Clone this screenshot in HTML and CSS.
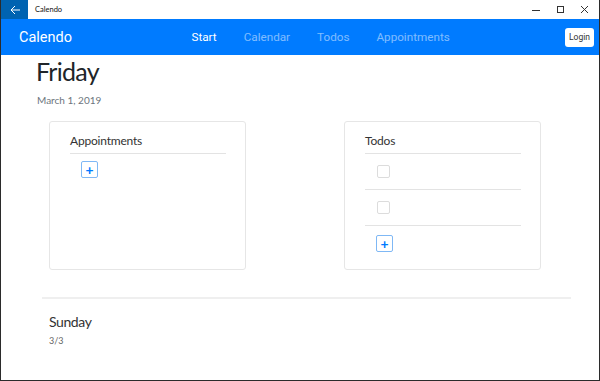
FILE: index.html
```html
<!DOCTYPE html>
<html lang="en">
<head>
    <meta charset="UTF-8">
    <meta name="viewport" content="width=device-width, initial-scale=1.0">
    <title>Calendo</title>
    <link rel="stylesheet" href="styles.css">
</head>
<body>
    <div class="window">
        <div class="titlebar">
            <div class="back">
                <svg width="10" height="10" viewBox="0 0 10 10">
                    <path d="M1 5h9M5 1L1 5l4 4" fill="none" stroke="#fff" stroke-width="1"/>
                </svg>
            </div>
            <span class="title">Calendo</span>
            <div class="controls">
                <svg width="10" height="10" viewBox="0 0 10 10">
                    <path d="M0 5.5h8" stroke="#333" stroke-width="1"/>
                </svg>
                <svg width="10" height="10" viewBox="0 0 10 10">
                    <rect x="1.5" y="1.5" width="6" height="6" fill="none" stroke="#333" stroke-width="1"/>
                </svg>
                <svg width="10" height="10" viewBox="0 0 10 10">
                    <path d="M1 1l7 7M8 1L1 8" stroke="#333" stroke-width="1"/>
                </svg>
            </div>
        </div>

        <nav class="navbar">
            <span class="brand">Calendo</span>
            <ul class="nav">
                <li class="active">Start</li>
                <li>Calendar</li>
                <li>Todos</li>
                <li>Appointments</li>
            </ul>
            <button class="login">Login</button>
        </nav>

        <main class="content">
            <section class="today">
                <h1>Friday</h1>
                <p class="date">March 1, 2019</p>
                <div class="cards">
                    <div class="card">
                        <div class="card-header">Appointments</div>
                        <button class="add-btn">+</button>
                    </div>
                    <div class="card">
                        <div class="card-header">Todos</div>
                        <div class="todo-row"><span class="checkbox"></span></div>
                        <div class="todo-row"><span class="checkbox"></span></div>
                        <button class="add-btn">+</button>
                    </div>
                </div>
            </section>

            <hr class="divider">

            <section class="other-day">
                <h2>Sunday</h2>
                <p class="short-date">3/3</p>
            </section>
        </main>
    </div>
</body>
</html>
```

FILE: styles.css
```css
* {
    box-sizing: border-box;
}

body {
    margin: 0;
    font-family: Lato, "Open Sans", sans-serif;
    background-color: #ffffff;
}

.window {
    width: 600px;
    height: 381px;
    border: 1px solid #2b2b2b;
    border-top: none;
    overflow: hidden;
}

/* title bar */
.titlebar {
    height: 19px;
    display: flex;
    align-items: center;
    background-color: #ffffff;
}
.back {
    width: 27px;
    height: 19px;
    background-color: #0063b1;
    display: flex;
    justify-content: center;
    align-items: center;
}
.title {
    margin-left: 7px;
    font-size: 7.5px;
    color: #111;
}
.controls {
    margin-left: auto;
    display: flex;
    gap: 14px;
    padding-right: 9px;
}

/* nav bar */
.navbar {
    height: 36px;
    background-color: #007bff;
    display: flex;
    align-items: center;
    padding: 0 5px 0 18px;
    font-family: Roboto, sans-serif;
}
.brand {
    color: #ffffff;
    font-size: 14.5px;
}
.nav {
    list-style: none;
    display: flex;
    margin: 0 0 0 106px;
    padding: 0;
}
.nav li {
    padding: 0 13.5px;
    font-size: 11.7px;
    color: rgba(255, 255, 255, 0.5);
}
.nav li.active {
    color: #ffffff;
}
.login {
    margin-left: auto;
    background-color: #ffffff;
    border: none;
    border-radius: 3px;
    font-family: Roboto, sans-serif;
    font-size: 8.5px;
    color: #333;
    width: 29px;
    height: 19px;
    padding: 0;
}

/* content */
h1 {
    margin: 1px 0 0 35px;
    font-size: 25px;
    letter-spacing: -0.7px;
    font-weight: 400;
    line-height: 30px;
    color: #212529;
}
.date {
    margin: 8px 0 0 36px;
    font-size: 10px;
    line-height: 1.2;
    color: #6c757d;
}
.cards {
    display: grid;
    grid-template-columns: 197px 197px;
    column-gap: 98px;
    margin: 15px 0 0 48px;
}
.card {
    border: 1px solid #e6e6e6;
    border-radius: 3px;
    padding: 0 19px 18px 20px;
    height: 149px;
}
.card-header {
    padding: 11px 0 5px;
    font-size: 12px;
    letter-spacing: -0.2px;
    line-height: 15px;
    color: #333;
    border-bottom: 1px solid #e3e3e3;
}
.add-btn {
    display: block;
    margin: 7px 0 0 11px;
    width: 17px;
    height: 17px;
    padding: 0;
    border: 1px solid #7fb8f5;
    border-radius: 2px;
    background-color: #ffffff;
    color: #007bff;
    font-family: Lato, sans-serif;
    font-weight: 700;
    font-size: 14px;
    line-height: 14px;
}
.todo-row {
    padding: 11px 0 11px 12px;
    border-bottom: 1px solid #e3e3e3;
    height: 36px;
}
.checkbox {
    display: block;
    width: 13px;
    height: 13px;
    border: 1px solid #dcdcdc;
    border-radius: 2px;
}
.todo-row + .add-btn {
    margin-top: 9px;
}

.divider {
    margin: 27px 28px 0 41px;
    border: none;
    border-top: 2px solid #efefef;
}
h2 {
    margin: 14px 0 0 48px;
    font-size: 14px;
    letter-spacing: -0.4px;
    font-weight: 400;
    line-height: 18px;
    color: #333;
}
.short-date {
    margin: 4px 0 0 48px;
    font-size: 9px;
    color: #666;
}
```
